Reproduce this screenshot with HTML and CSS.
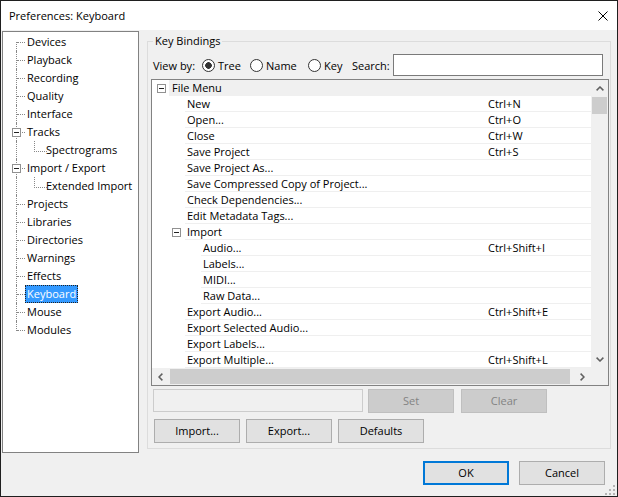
FILE: index.html
```html
<!DOCTYPE html>
<html lang="en">
<head>
<meta charset="utf-8">
<title>Preferences: Keyboard</title>
<link rel="stylesheet" href="styles.css">
</head>
<body>
<div class="window">
  <header class="titlebar">
    <span class="title">Preferences: Keyboard</span>
    <svg class="close-icon" width="10" height="10" viewBox="0 0 10 10"><path d="M0.5 0.5L9.5 9.5M9.5 0.5L0.5 9.5" stroke="#000" stroke-width="1" fill="none"/></svg>
  </header>
  <div class="client">
    <div class="main">
      <nav class="nav">
        <div class="nav-row first"><span class="nav-label">Devices</span></div>
        <div class="nav-row"><span class="nav-label">Playback</span></div>
        <div class="nav-row"><span class="nav-label">Recording</span></div>
        <div class="nav-row"><span class="nav-label">Quality</span></div>
        <div class="nav-row"><span class="nav-label">Interface</span></div>
        <div class="nav-row parent"><span class="exp"></span><span class="nav-label">Tracks</span></div>
        <div class="nav-row child"><span class="nav-label">Spectrograms</span></div>
        <div class="nav-row parent"><span class="exp"></span><span class="nav-label">Import / Export</span></div>
        <div class="nav-row child"><span class="nav-label">Extended Import</span></div>
        <div class="nav-row"><span class="nav-label">Projects</span></div>
        <div class="nav-row"><span class="nav-label">Libraries</span></div>
        <div class="nav-row"><span class="nav-label">Directories</span></div>
        <div class="nav-row"><span class="nav-label">Warnings</span></div>
        <div class="nav-row"><span class="nav-label">Effects</span></div>
        <div class="nav-row"><span class="nav-label selected">Keyboard</span></div>
        <div class="nav-row"><span class="nav-label">Mouse</span></div>
        <div class="nav-row last"><span class="nav-label">Modules</span></div>
      </nav>
      <fieldset class="group">
        <legend class="group-title">Key Bindings</legend>
        <div class="viewby">
          <span class="vb-label">View by:</span>
          <span class="radio-opt opt-tree"><span class="radio checked"></span>Tree</span>
          <span class="radio-opt opt-name"><span class="radio"></span>Name</span>
          <span class="radio-opt opt-key"><span class="radio"></span>Key</span>
          <span class="search-label">Search:</span>
          <span class="search-box"></span>
        </div>
        <div class="kb-list">
          <div class="kb-rows">
            <div class="kb-row l1 current"><span class="lead"><span class="exp"></span></span><span class="cell"><span class="name">File Menu</span><span class="key"></span></span></div>
            <div class="kb-row l2"><span class="lead"></span><span class="cell"><span class="name">New</span><span class="key">Ctrl+N</span></span></div>
            <div class="kb-row l2"><span class="lead"></span><span class="cell"><span class="name">Open...</span><span class="key">Ctrl+O</span></span></div>
            <div class="kb-row l2"><span class="lead"></span><span class="cell"><span class="name">Close</span><span class="key">Ctrl+W</span></span></div>
            <div class="kb-row l2"><span class="lead"></span><span class="cell"><span class="name">Save Project</span><span class="key">Ctrl+S</span></span></div>
            <div class="kb-row l2"><span class="lead"></span><span class="cell"><span class="name">Save Project As...</span><span class="key"></span></span></div>
            <div class="kb-row l2"><span class="lead"></span><span class="cell"><span class="name">Save Compressed Copy of Project...</span><span class="key"></span></span></div>
            <div class="kb-row l2"><span class="lead"></span><span class="cell"><span class="name">Check Dependencies...</span><span class="key"></span></span></div>
            <div class="kb-row l2"><span class="lead"></span><span class="cell"><span class="name">Edit Metadata Tags...</span><span class="key"></span></span></div>
            <div class="kb-row l2 sub"><span class="lead"><span class="exp"></span></span><span class="cell"><span class="name">Import</span><span class="key"></span></span></div>
            <div class="kb-row l3"><span class="lead"></span><span class="cell"><span class="name">Audio...</span><span class="key">Ctrl+Shift+I</span></span></div>
            <div class="kb-row l3"><span class="lead"></span><span class="cell"><span class="name">Labels...</span><span class="key"></span></span></div>
            <div class="kb-row l3"><span class="lead"></span><span class="cell"><span class="name">MIDI...</span><span class="key"></span></span></div>
            <div class="kb-row l3"><span class="lead"></span><span class="cell"><span class="name">Raw Data...</span><span class="key"></span></span></div>
            <div class="kb-row l2"><span class="lead"></span><span class="cell"><span class="name">Export Audio...</span><span class="key">Ctrl+Shift+E</span></span></div>
            <div class="kb-row l2"><span class="lead"></span><span class="cell"><span class="name">Export Selected Audio...</span><span class="key"></span></span></div>
            <div class="kb-row l2"><span class="lead"></span><span class="cell"><span class="name">Export Labels...</span><span class="key"></span></span></div>
            <div class="kb-row l2"><span class="lead"></span><span class="cell"><span class="name">Export Multiple...</span><span class="key">Ctrl+Shift+L</span></span></div>
          </div>
          <div class="vscroll">
            <span class="sb-btn"><svg width="8" height="5" viewBox="0 0 8 5"><polyline points="0.6,4.4 4,1 7.4,4.4" fill="none" stroke="#606060" stroke-width="1.5"/></svg></span>
            <span class="thumb-v"></span>
            <span class="sb-fill"></span>
            <span class="sb-btn"><svg width="8" height="5" viewBox="0 0 8 5"><polyline points="0.6,0.6 4,4 7.4,0.6" fill="none" stroke="#606060" stroke-width="1.5"/></svg></span>
          </div>
          <div class="hscroll">
            <span class="sb-btn"><svg width="5" height="8" viewBox="0 0 5 8"><polyline points="4.4,0.6 1,4 4.4,7.4" fill="none" stroke="#606060" stroke-width="1.5"/></svg></span>
            <span class="thumb-h"></span>
            <span class="sb-fill"></span>
            <span class="sb-btn"><svg width="5" height="8" viewBox="0 0 5 8"><polyline points="0.6,0.6 4,4 0.6,7.4" fill="none" stroke="#606060" stroke-width="1.5"/></svg></span>
          </div>
          <div class="corner"></div>
        </div>
        <div class="set-row">
          <span class="shortcut-box"></span>
          <button class="btn btn-set" disabled>Set</button>
          <button class="btn btn-clear" disabled>Clear</button>
        </div>
        <div class="btn-row">
          <button class="btn">Import...</button>
          <button class="btn">Export...</button>
          <button class="btn">Defaults</button>
        </div>
      </fieldset>
    </div>
    <div class="footer">
      <button class="btn btn-default">OK</button>
      <button class="btn">Cancel</button>
    </div>
  </div>
  <svg class="grip" width="10" height="10" viewBox="0 0 10 10">
    <rect x="8" y="0" width="2" height="2" fill="#b4b4b4"/>
    <rect x="4" y="4" width="2" height="2" fill="#b4b4b4"/>
    <rect x="8" y="4" width="2" height="2" fill="#b4b4b4"/>
    <rect x="0" y="8" width="2" height="2" fill="#b4b4b4"/>
    <rect x="4" y="8" width="2" height="2" fill="#b4b4b4"/>
    <rect x="8" y="8" width="2" height="2" fill="#b4b4b4"/>
  </svg>
</div>
</body>
</html>
```
FILE: styles.css
```css
* { box-sizing: border-box; }
html, body { margin: 0; padding: 0; }
body {
  width: 618px; height: 497px; overflow: hidden;
  background: #f0f0f0;
  font-family: "Open Sans", "Noto Sans", "DejaVu Sans", sans-serif;
  font-size: 11px; color: #000;
}
.window {
  position: relative; width: 618px; height: 497px;
  border: 1px solid #1f1f1f; background: #f0f0f0;
  display: flex; flex-direction: column;
}
.titlebar {
  flex: none; height: 29px; background: #fff;
  display: flex; align-items: center; padding: 0 9px 0 8px;
}
.title { flex: 1; line-height: 16px; }
.close-icon { display: block; }

.client { flex: 1; display: flex; flex-direction: column; padding: 1px 0 11px 1px; }
.main { display: flex; height: 422px; flex: none; }

/* left navigation tree */
.nav { width: 137px; border: 1px solid #828282; background: #fff; padding-top: 1px; }
.nav-row { position: relative; display: flex; align-items: center; height: 18px; padding-left: 22px; }
.nav-row::before { content: ""; position: absolute; left: 13px; top: 0; bottom: 0; border-left: 1px dotted #888; }
.nav-row::after { content: ""; position: absolute; left: 14px; top: 9px; width: 8px; border-top: 1px dotted #888; }
.nav-row.first::before { top: 9px; }
.nav-row.last::before { bottom: 8px; }
.nav-row.parent { padding-left: 9px; }
.nav-row.parent .exp { margin-right: 4px; }
.nav-row.child { padding-left: 41px; }
.nav-row.child::after { left: 31px; top: 0; width: 12px; height: 10px; border-top: 0; border-left: 1px dotted #888; border-bottom: 1px dotted #888; }
.nav-label { padding: 0 2px; line-height: 18px; white-space: nowrap; }
.nav-label.selected { background: #3399ff; color: #fff; border: 1px dotted #222; padding: 0 1px; line-height: 16px; }

.exp {
  position: relative; z-index: 1; flex: none; width: 9px; height: 9px;
  border: 1px solid #919191;
  background: linear-gradient(#222, #222) center / 5px 1px no-repeat, #fff;
}

/* group box */
.group {
  margin: 2px 0 4px 8px; width: 464px; height: 416px; min-width: 0;
  border: 1px solid #dcdcdc; padding: 5px 1px 5px 3px;
}
.group-title { padding: 0 2px; margin-left: 2px; line-height: 16px; }

.viewby { display: flex; align-items: center; height: 22px; }
.vb-label { margin-left: 2px; width: 49px; }
.radio-opt { display: flex; align-items: center; gap: 3px; }
.opt-tree { width: 48px; }
.opt-name { width: 58px; }
.opt-key { width: 44px; }
.radio { flex: none; width: 13px; height: 13px; border: 1px solid #333; border-radius: 50%; background: #fff; }
.radio.checked { background: radial-gradient(circle, #333 0 3px, #fff 3.6px); }
.search-label { width: 41px; }
.search-box { width: 210px; height: 22px; border: 1px solid #7a7a7a; background: #fff; }

/* key bindings list */
.kb-list {
  margin-top: 3px; height: 307px; border: 1px solid #828282; background: #fff;
  display: grid; grid-template-columns: 1fr 17px; grid-template-rows: 288px 17px;
}
.kb-rows { overflow: hidden; }
.kb-row { display: flex; height: 16px; }
.lead { flex: none; display: flex; align-items: center; }
.l1 .lead { width: 17px; padding-left: 5px; }
.l2 .lead { width: 33px; padding-left: 20px; }
.l3 .lead { width: 49px; }
.cell {
  flex: 1; min-width: 0; display: flex; align-items: center;
  padding-left: 2px; line-height: 15px; white-space: nowrap;
  border-bottom: 1px solid #efefef;
}
.l1 .cell { padding-left: 3px; }
.current .cell { background: #f0f0f0; border-bottom-color: #f0f0f0; }
.name { flex: 1; overflow: hidden; }
.key { flex: none; width: 103px; }

.vscroll { background: #f0f0f0; display: flex; flex-direction: column; }
.hscroll { background: #f0f0f0; display: flex; }
.sb-btn { flex: none; width: 17px; height: 17px; display: flex; align-items: center; justify-content: center; }
.sb-btn svg { display: block; }
.thumb-v { flex: none; height: 17px; margin: 0 1px; background: #cdcdcd; }
.thumb-h { flex: none; width: 400px; margin: 1px 0 1px 1px; background: #cdcdcd; }
.sb-fill { flex: 1; }
.corner { background: #f0f0f0; }

.set-row { display: flex; align-items: flex-start; height: 24px; margin-top: 3px; }
.shortcut-box { width: 210px; height: 23px; margin-left: 2px; border: 1px solid #cccccc; background: #f0f0f0; }
.btn-set { margin-left: 5px; }
.btn-clear { margin-left: 7px; }
.btn-row { display: flex; gap: 6px; margin-top: 6px; margin-left: 3px; }

.btn {
  width: 86px; height: 24px; padding: 0;
  border: 1px solid #adadad; background: #e1e1e1;
  font: inherit; color: #000; line-height: 20px;
}
.btn:disabled { background: #cccccc; border-color: #bfbfbf; color: #838383; }
.btn-default { border: 2px solid #0078d7; }

.footer { flex: none; display: flex; justify-content: flex-end; gap: 10px; margin-top: 8px; padding-right: 12px; }
.grip { position: absolute; right: 2px; bottom: 1px; display: block; }
```
